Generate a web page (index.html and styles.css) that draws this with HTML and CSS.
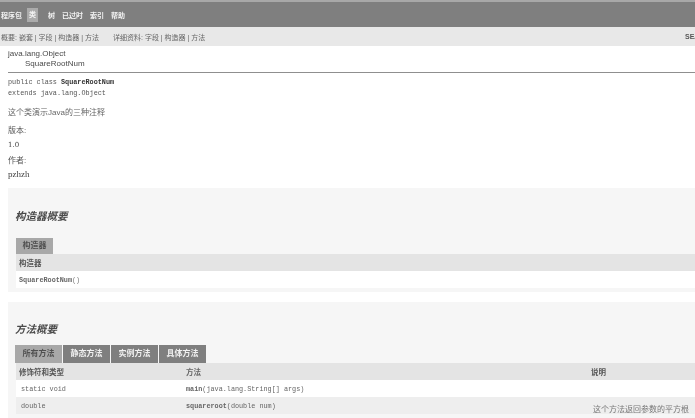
FILE: index.html
```html
<!DOCTYPE html>
<html lang="zh">
<head>
<meta charset="utf-8">
<title>SquareRootNum</title>
<link rel="stylesheet" href="styles.css">
</head>
<body>
<div class="page">
  <nav class="topnav">
    <span class="navitem">程序包</span>
    <span class="navitem current">类</span>
    <span class="navitem">树</span>
    <span class="navitem">已过时</span>
    <span class="navitem">索引</span>
    <span class="navitem">帮助</span>
  </nav>
  <div class="subnav">
    <span class="summary">概要: 嵌套 | 字段 | 构造器 | 方法</span>
    <span class="detail">详细资料: 字段 | 构造器 | 方法</span>
    <span class="search">SEARCH</span>
  </div>
  <div class="inherit">
    <div>java.lang.Object</div>
    <div class="inherit-child">SquareRootNum</div>
  </div>
  <div class="decl">
    <div class="mono">public class <b>SquareRootNum</b></div>
    <div class="mono extends">extends java.lang.Object</div>
  </div>
  <div class="doc">
    <p class="desc">这个类演示Java的三种注释</p>
    <p class="tag tag-version">版本:</p>
    <p class="val val-version">1.0</p>
    <p class="tag tag-author">作者:</p>
    <p class="val val-author">pzhzh</p>
  </div>
  <section class="block block-ctor">
    <h3 class="title">构造器概要</h3>
    <div class="tabs"><span class="tab active wide">构造器</span></div>
    <div class="row head"><span class="c1">构造器</span></div>
    <div class="row white"><span class="c1 mono link"><b>SquareRootNum</b>()</span></div>
  </section>
  <section class="block block-method">
    <h3 class="title">方法概要</h3>
    <div class="tabs">
      <span class="tab active">所有方法</span>
      <span class="tab">静态方法</span>
      <span class="tab">实例方法</span>
      <span class="tab">具体方法</span>
    </div>
    <div class="row head"><span class="c1 col-a">修饰符和类型</span><span class="col-b">方法</span><span class="col-c">说明</span></div>
    <div class="row white"><span class="c1 col-a mono">static void</span><span class="col-b mono"><b>main</b>(java.lang.String[] args)</span><span class="col-c"></span></div>
    <div class="row alt"><span class="c1 col-a mono">double</span><span class="col-b mono"><b>squareroot</b>(double num)</span><span class="col-c descr">这个方法返回参数的平方根</span></div>
  </section>
</div>
</body>
</html>
```
FILE: styles.css
```css
* { box-sizing: border-box; }
html, body { margin: 0; padding: 0; background: #fff; }
body {
  width: 695px;
  height: 418px;
  overflow: hidden;
  font-family: "Liberation Sans", "Noto Sans CJK SC", sans-serif;
  font-size: 8px;
  color: #555;
}
.page { filter: blur(0.4px); }
.mono { font-family: "Liberation Mono", "Noto Sans CJK SC", monospace; font-size: 6.8px; }
.topnav {
  height: 27px;
  background: #7f7f7f;
  border-top: 2px solid #a8a8a8;
  display: flex;
  align-items: center;
  padding-left: 1px;
  color: #f2f2f2;
  font-size: 7px;
  font-weight: bold;
}
.navitem { margin-right: 7px; }
.navitem:first-child { margin-right: 5px; }
.navitem.current {
  background: #ababab;
  color: #f4f4f4;
  line-height: 8px;
  padding: 3px 2px;
  margin-right: 10px;
}
.subnav {
  height: 19px;
  background: #e8e8e8;
  display: flex;
  align-items: center;
  padding-left: 1px;
  font-size: 7px;
  color: #666;
  white-space: nowrap;
}
.detail { margin-left: 14px; }
.search { margin-left: auto; margin-right: -14px; font-size: 7px; font-weight: bold; width: 24px; color: #555; }
.inherit {
  margin: 3px 0 0 8px;
  border-bottom: 1px solid #8f8f8f;
  padding-bottom: 4px;
  font-size: 8px;
  line-height: 9.5px;
  color: #4a4a4a;
}
.inherit-child { padding-left: 17px; }
.decl { padding: 4px 0 0 8px; color: #555; }
.decl .mono { line-height: 11px; }
.decl b { color: #333; }
.doc { padding-left: 8px; }
.doc p { margin: 0; }
.desc { margin-top: 8px !important; line-height: 11px; color: #666; }
.tag { line-height: 10px; color: #555; }
.tag-version { margin-top: 8px !important; }
.tag-author { margin-top: 6px !important; }
.val { font-family: "Liberation Serif", serif; font-size: 9px; line-height: 10px; color: #444; }
.val-version { margin-top: 4px !important; font-family: "DejaVu Serif", serif; font-size: 7px; }
.val-author { margin-top: 3px !important; }
.block {
  margin-left: 8px;
  background: #f6f6f6;
  padding: 0 0 4px 8px;
}
.block-ctor { margin-top: 9px; height: 104px; }
.block-method { margin-top: 10px; height: 120px; }
.title {
  margin: 0 0 0 -1px;
  font-size: 10.5px;
  line-height: 14px;
  font-style: italic;
  font-weight: bold;
  color: #4a4a4a;
}
.block-ctor .title { padding-top: 21px; height: 50px; }
.block-method .title { padding-top: 20px; height: 43px; }
.tabs { display: flex; gap: 1px; height: 16px; }
.block-method .tabs { height: 18px; margin-left: -1px; }
.tab {
  background: #7f7f7f;
  color: #f0f0f0;
  font-weight: bold;
  width: 47px;
  justify-content: center;
  display: flex;
  align-items: center;
  font-size: 8px;
  line-height: 10px;
}
.tab.wide { width: 37px; }
.tab.active { background: #a8a8a8; color: #505050; }
.row { height: 17px; display: flex; align-items: center; }
.row.head { background: #e4e4e4; font-weight: bold; color: #555; font-size: 7.5px; }
.row.white { background: #fff; }
.row.alt { background: #eeeeee; }
.c1 { padding-left: 3px; }
.link { font-size: 6.8px; color: #777; }
.link b { color: #666; }
.col-a { width: 170px; flex: none; }
.col-b { width: 405px; flex: none; color: #666; }
.col-c { flex: 1; }
.mono.col-a { padding-left: 5px; color: #666; }
.descr { color: #777; font-size: 8px; padding-top: 5px; padding-left: 2px; white-space: nowrap; }
```
